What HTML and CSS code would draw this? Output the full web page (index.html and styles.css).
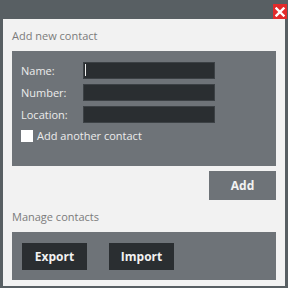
FILE: index.html
```html
<!DOCTYPE html>
<html lang="en">
<head>
  <meta charset="UTF-8" />
  <title>Contacts</title>
  <link rel="stylesheet" href="styles.css">
</head>
<body>
  <div class="window">
    <!-- Title bar -->
    <div class="titlebar">
      <div class="close">
        <svg width="10" height="10" viewBox="0 0 10 10">
          <path d="M1.5 1.5 L8.5 8.5 M8.5 1.5 L1.5 8.5" stroke="#fff" stroke-width="2.4" stroke-linecap="square"/>
        </svg>
      </div>
    </div>
    <div class="content">
      <div class="section-title">Add new contact</div>
      <div class="panel form-panel">
        <div class="row">
          <label>Name:</label>
          <div class="field focused"></div>
        </div>
        <div class="row">
          <label>Number:</label>
          <div class="field"></div>
        </div>
        <div class="row">
          <label>Location:</label>
          <div class="field"></div>
        </div>
        <div class="check-row">
          <span class="checkbox"></span>
          <span>Add another contact</span>
        </div>
      </div>
      <div class="add-row">
        <button class="btn btn-light">Add</button>
      </div>
      <div class="section-title manage">Manage contacts</div>
      <div class="panel button-panel">
        <button class="btn btn-dark">Export</button>
        <button class="btn btn-dark">Import</button>
      </div>
    </div>
  </div>
</body>
</html>
```

FILE: styles.css
```css
body {
  margin: 0;
  font-family: 'Open Sans', 'DejaVu Sans', sans-serif;
  font-size: 11px;
}
.window {
  width: 288px;
  height: 288px;
  background: #585f63;
  display: flex;
  flex-direction: column;
}
.titlebar {
  height: 19px;
  display: flex;
  justify-content: flex-end;
  align-items: flex-start;
  padding-top: 4px;
  padding-right: 1px;
  box-sizing: border-box;
}
.close {
  width: 14px;
  height: 15px;
  background: #e22b2b;
  display: flex;
  align-items: center;
  justify-content: center;
}
.content {
  flex: 1;
  background: #f2f2f2;
  margin: 0 3px 2px 3px;
  padding: 10px 9px 5px 9px;
  display: flex;
  flex-direction: column;
}
.section-title {
  color: #7b7b7b;
  font-size: 11px;
  line-height: 14px;
  height: 22px;
}
.manage {
  margin-top: 10px;
}
.panel {
  background: #6e7378;
}
.form-panel {
  height: 115px;
  box-sizing: border-box;
  padding: 11px 9px 0 9px;
  display: flex;
  flex-direction: column;
  gap: 5px;
}
.row {
  display: flex;
  align-items: center;
  height: 17px;
}
.row label {
  width: 62px;
  color: #ececec;
}
.field {
  width: 132px;
  height: 17px;
  background: #2a2e31;
  border: 1px solid #3c4145;
  box-sizing: border-box;
  position: relative;
}
.focused::after {
  content: '';
  position: absolute;
  left: 1px;
  top: 1px;
  width: 1px;
  height: 12px;
  background: #f0f0f0;
}
.check-row {
  display: flex;
  align-items: center;
  gap: 4px;
  color: #ececec;
}
.checkbox {
  width: 12px;
  height: 12px;
  background: #fff;
  display: inline-block;
}
.add-row {
  display: flex;
  justify-content: flex-end;
  margin-top: 5px;
}
.btn {
  border: none;
  font-family: inherit;
  font-size: 12px;
  font-weight: bold;
  color: #f2f2f2;
  padding: 0;
}
.btn-light {
  background: #6e7378;
  width: 67px;
  height: 29px;
}
.button-panel {
  height: 48px;
  box-sizing: border-box;
  padding: 11px 10px 0 10px;
  display: flex;
  align-items: flex-start;
  gap: 22px;
}
.btn-dark {
  background: #2a2e31;
  width: 65px;
  height: 27px;
}
```
